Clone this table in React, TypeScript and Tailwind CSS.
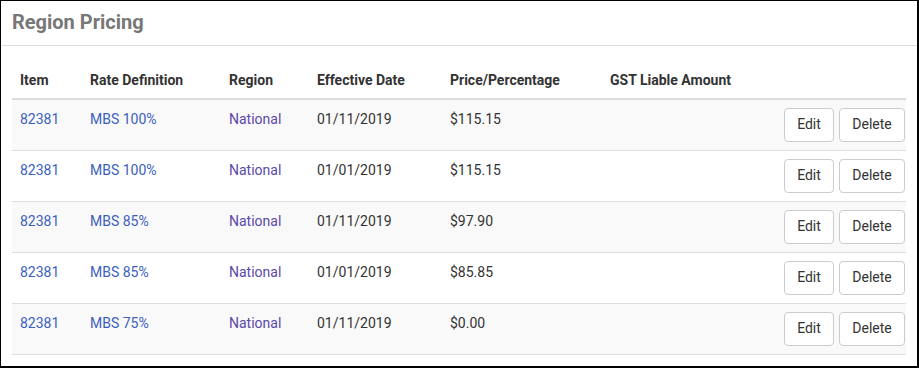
import React from "react";

const rows = [
  { item: "82381", rate: "MBS 100%", region: "National", date: "01/11/2019", price: "$115.15" },
  { item: "82381", rate: "MBS 100%", region: "National", date: "01/01/2019", price: "$115.15" },
  { item: "82381", rate: "MBS 85%", region: "National", date: "01/11/2019", price: "$97.90" },
  { item: "82381", rate: "MBS 85%", region: "National", date: "01/01/2019", price: "$85.85" },
  { item: "82381", rate: "MBS 75%", region: "National", date: "01/11/2019", price: "$0.00" },
];

export default function App() {
  return (
    <div className="w-[919px] h-[368px] bg-white" style={{ fontFamily: "Roboto, 'Liberation Sans', sans-serif" }}>
      <div className="w-[919px] h-[368px] border-l border-t border-r-2 border-b-2 border-black box-border flex flex-col">
        <div className="h-[45px] border-b border-[#dddddd] px-[11px] flex items-center">
          <h2 className="text-[20px] font-bold text-[#777777] leading-none -mt-[3px]">Region Pricing</h2>
        </div>
        <div className="pl-[11px] pr-[11px] pt-[18px]">
          <table className="w-full border-collapse text-[14px] text-[#333333]">
            <thead>
              <tr className="border-b-2 border-[#dddddd]">
                <th className="w-[70px] text-left font-bold px-2 pt-[6px] pb-[8px] leading-[20px]">Item</th>
                <th className="w-[139px] text-left font-bold px-2 pt-[6px] pb-[8px] leading-[20px]">Rate Definition</th>
                <th className="w-[88px] text-left font-bold px-2 pt-[6px] pb-[8px] leading-[20px]">Region</th>
                <th className="w-[133px] text-left font-bold px-2 pt-[6px] pb-[8px] leading-[20px]">Effective Date</th>
                <th className="w-[160px] text-left font-bold px-2 pt-[6px] pb-[8px] leading-[20px]">Price/Percentage</th>
                <th className="text-left font-bold px-2 pt-[6px] pb-[8px] leading-[20px]">GST Liable Amount</th>
                <th className="w-[140px]"></th>
              </tr>
            </thead>
            <tbody>
              {rows.map((r, i) => (
                <tr key={i} className={`border-b border-[#dddddd] ${i % 2 === 0 ? "bg-[#f9f9f9]" : "bg-white"}`}>
                  <td className="align-top px-2 pt-[9px] leading-[20px] h-[51px]">
                    <span className="text-[#3b5fc0]">{r.item}</span>
                  </td>
                  <td className="align-top px-2 pt-[9px] leading-[20px]">
                    <span className="text-[#3b5fc0]">{r.rate}</span>
                  </td>
                  <td className="align-top px-2 pt-[9px] leading-[20px]">
                    <span className="text-[#5b48a8]">{r.region}</span>
                  </td>
                  <td className="align-top px-2 pt-[9px] leading-[20px]">{r.date}</td>
                  <td className="align-top px-2 pt-[9px] leading-[20px]">{r.price}</td>
                  <td className="align-top px-2 pt-[9px] leading-[20px]"></td>
                  <td className="align-middle pr-[1px] py-0">
                    <div className="flex justify-end gap-[5px]">
                      <button className="h-[34px] w-[50px] rounded-[4px] border border-[#cccccc] bg-white text-[14px] text-[#333333]">Edit</button>
                      <button className="h-[34px] w-[66px] rounded-[4px] border border-[#cccccc] bg-white text-[14px] text-[#333333]">Delete</button>
                    </div>
                  </td>
                </tr>
              ))}
            </tbody>
          </table>
        </div>
      </div>
    </div>
  );
}
